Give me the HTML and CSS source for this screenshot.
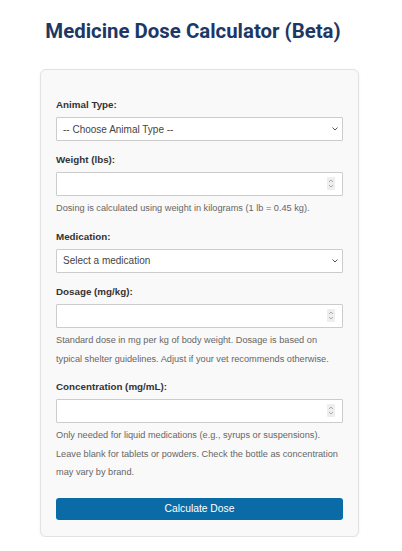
FILE: index.html
```html
<!DOCTYPE html>
<html lang="en">
<head>
    <meta charset="UTF-8">
    <meta name="viewport" content="width=device-width, initial-scale=1.0">
    <title>Medicine Dose Calculator (Beta)</title>
    <link rel="stylesheet" href="styles.css">
</head>
<body>
    <h1>Medicine Dose Calculator (Beta)</h1>
    <form class="card" id="dose-form">
        <div class="field">
            <label for="animal">Animal Type:</label>
            <div class="select-wrap">
                <select id="animal">
                    <option value="">-- Choose Animal Type --</option>
                    <option value="dog">Dog</option>
                    <option value="cat">Cat</option>
                </select>
                <svg class="chevron" width="6" height="4" viewBox="0 0 6 4"><path d="M0.5 0.5 L3 3 L5.5 0.5" fill="none" stroke="#555" stroke-width="1"/></svg>
            </div>
        </div>

        <div class="field">
            <label for="weight">Weight (lbs):</label>
            <div class="input-wrap">
                <input type="number" id="weight">
                <span class="spinner"><svg width="8" height="11" viewBox="0 0 8 11"><path d="M2 4 L4 2 L6 4 M2 7 L4 9 L6 7" fill="none" stroke="#999" stroke-width="0.8"/></svg></span>
            </div>
            <p class="help">Dosing is calculated using weight in kilograms (1 lb = 0.45 kg).</p>
        </div>

        <div class="field">
            <label for="medication">Medication:</label>
            <div class="select-wrap">
                <select id="medication">
                    <option value="">Select a medication</option>
                </select>
                <svg class="chevron" width="6" height="4" viewBox="0 0 6 4"><path d="M0.5 0.5 L3 3 L5.5 0.5" fill="none" stroke="#555" stroke-width="1"/></svg>
            </div>
        </div>

        <div class="field">
            <label for="dosage">Dosage (mg/kg):</label>
            <div class="input-wrap">
                <input type="number" id="dosage">
                <span class="spinner"><svg width="8" height="11" viewBox="0 0 8 11"><path d="M2 4 L4 2 L6 4 M2 7 L4 9 L6 7" fill="none" stroke="#999" stroke-width="0.8"/></svg></span>
            </div>
            <p class="help">Standard dose in mg per kg of body weight. Dosage is based on typical shelter guidelines. Adjust if your vet recommends otherwise.</p>
        </div>

        <div class="field">
            <label for="concentration">Concentration (mg/mL):</label>
            <div class="input-wrap">
                <input type="number" id="concentration">
                <span class="spinner"><svg width="8" height="11" viewBox="0 0 8 11"><path d="M2 4 L4 2 L6 4 M2 7 L4 9 L6 7" fill="none" stroke="#999" stroke-width="0.8"/></svg></span>
            </div>
            <p class="help">Only needed for liquid medications (e.g., syrups or suspensions). Leave blank for tablets or powders. Check the bottle as concentration may vary by brand.</p>
        </div>

        <button type="button" class="btn">Calculate Dose</button>
    </form>
</body>
</html>
```

FILE: styles.css
```css
body {
    margin: 0;
    background-color: #fff;
    font-family: "Liberation Sans", Arial, sans-serif;
    color: #333;
}
h1 {
    margin: 18px 16px 0 0;
    font-family: Roboto, "Liberation Sans", sans-serif;
    font-weight: 700;
    font-size: 20.4px;
    line-height: 26px;
    color: #1d3865;
    text-align: center;
}
.card {
    box-sizing: border-box;
    width: 319px;
    margin: 25px 0 0 40px;
    padding: 28px 15px 16px;
    background-color: #f9f9f9;
    border: 1px solid #e2e2e2;
    border-radius: 6px;
    box-shadow: 0 1px 3px rgba(0, 0, 0, 0.06);
}
.field {
    margin-bottom: 12.2px;
}
.field label {
    display: block;
    margin-bottom: 5px;
    font-size: 9.8px;
    font-weight: bold;
    line-height: 14px;
    color: #333;
}
.select-wrap,
.input-wrap {
    position: relative;
}
.field select,
.field input {
    display: block;
    box-sizing: border-box;
    width: 100%;
    height: 24px;
    margin: 0;
    padding: 0 6px;
    background-color: #fff;
    border: 1px solid #ccc;
    border-radius: 1px;
    font-family: "Liberation Sans", Arial, sans-serif;
    font-size: 10px;
    color: #444;
    appearance: none;
    -webkit-appearance: none;
    -moz-appearance: textfield;
}
.field input::-webkit-inner-spin-button,
.field input::-webkit-outer-spin-button {
    -webkit-appearance: none;
    margin: 0;
}
.chevron {
    position: absolute;
    right: 5px;
    top: 10px;
    pointer-events: none;
}
.spinner {
    position: absolute;
    right: 8px;
    top: 5px;
    width: 8px;
    height: 13px;
    display: flex;
    align-items: center;
    justify-content: center;
    background-color: #eee;
    border-radius: 1px;
    pointer-events: none;
}
.help {
    margin: 3px 0 0;
    font-size: 9.2px;
    line-height: 18.5px;
    color: #666;
}
.btn {
    display: block;
    width: 100%;
    height: 22px;
    margin-top: 16px;
    padding: 0;
    background-color: #0b6ba6;
    color: #fff;
    border: none;
    border-radius: 3px;
    font-family: "Liberation Sans", Arial, sans-serif;
    font-size: 10.3px;
    cursor: pointer;
}
.btn:hover {
    background-color: #085a8c;
}
```
